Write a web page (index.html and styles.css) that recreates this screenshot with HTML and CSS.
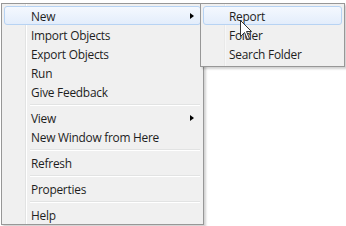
FILE: index.html
```html
<!DOCTYPE html>
<html>
<head>
<meta charset="utf-8">
<link rel="stylesheet" href="styles.css">
</head>
<body>
<div class="stage">
  <div class="menu main">
    <div class="item active"><span class="label">New</span><span class="arrow"></span></div>
    <div class="item"><span class="label">Import Objects</span></div>
    <div class="item"><span class="label">Export Objects</span></div>
    <div class="item"><span class="label">Run</span></div>
    <div class="item"><span class="label">Give Feedback</span></div>
    <div class="sep"></div>
    <div class="item"><span class="label">View</span><span class="arrow"></span></div>
    <div class="item"><span class="label">New Window from Here</span></div>
    <div class="sep"></div>
    <div class="item"><span class="label">Refresh</span></div>
    <div class="sep"></div>
    <div class="item"><span class="label">Properties</span></div>
    <div class="sep"></div>
    <div class="item"><span class="label">Help</span></div>
  </div>
  <div class="menu sub">
    <div class="item active"><span class="label">Report</span></div>
    <div class="item"><span class="label">Folder</span></div>
    <div class="item"><span class="label">Search Folder</span></div>
  </div>
  <svg class="cursor" width="13" height="21" viewBox="0 0 13 21">
    <path d="M0.5 0.5 L0.5 16.5 L4.5 12.5 L7.5 19.5 L9.5 18.5 L6.5 11.5 L11.5 11.5 Z" fill="#fff" stroke="#333" stroke-width="1"/>
  </svg>
</div>
</body>
</html>
```
FILE: styles.css
```css
html, body {
  margin: 0;
  padding: 0;
  background: #fff;
}
.stage {
  position: relative;
  width: 346px;
  height: 226px;
  overflow: hidden;
  font-family: "Open Sans", "Noto Sans", sans-serif;
  font-size: 11.9px;
  letter-spacing: -0.25px;
  color: #1e1e1e;
}
.menu {
  box-sizing: border-box;
  background: #f0f0f0;
  border: 1px solid #979797;
  box-shadow: 2px 2px 2px rgba(0,0,0,0.18);
}
.main {
  margin: 3px 0 0 1px;
  width: 203px;
  height: 222px;
  padding: 2px 2px 0 2px;
  background: linear-gradient(to right, #f0f0f0 0, #f0f0f0 23px, #e2e3e3 23px, #e2e3e3 24px, #ffffff 24px, #ffffff 25px, #f0f0f0 25px);
}
.sub {
  position: absolute;
  left: 200px;
  top: 3px;
  width: 145px;
  height: 64px;
  padding: 2px 2px 0 2px;
  background: linear-gradient(to right, #f0f0f0 0, #f0f0f0 23px, #e9e9e9 23px, #e9e9e9 24px, #f7f7f7 24px, #f7f7f7 25px, #f0f0f0 25px);
}
.item {
  box-sizing: border-box;
  height: 19px;
  display: flex;
  align-items: center;
  padding-left: 26px;
  padding-top: 1px;
  border: 1px solid transparent;
  border-radius: 3px;
}
.item.active {
  border-color: #b7d3f3;
  background: linear-gradient(to bottom, #f4f8fe, #e3edfb);
}
.label {
  flex: 1;
  line-height: 16px;
}
.sub .item {
  padding-left: 25px;
}
.arrow {
  width: 0;
  height: 0;
  border-top: 3.5px solid transparent;
  border-bottom: 3.5px solid transparent;
  border-left: 4px solid #000;
  margin-right: 6px;
}
.sep {
  height: 7px;
  margin-left: 26px;
  margin-right: 1px;
  display: flex;
  flex-direction: column;
  justify-content: center;
}
.sep::before {
  content: "";
  display: block;
  height: 1px;
  background: #e2e3e3;
}
.sep::after {
  content: "";
  display: block;
  height: 1px;
  background: #ffffff;
}
.cursor {
  position: absolute;
  left: 240px;
  top: 20px;
}
```
